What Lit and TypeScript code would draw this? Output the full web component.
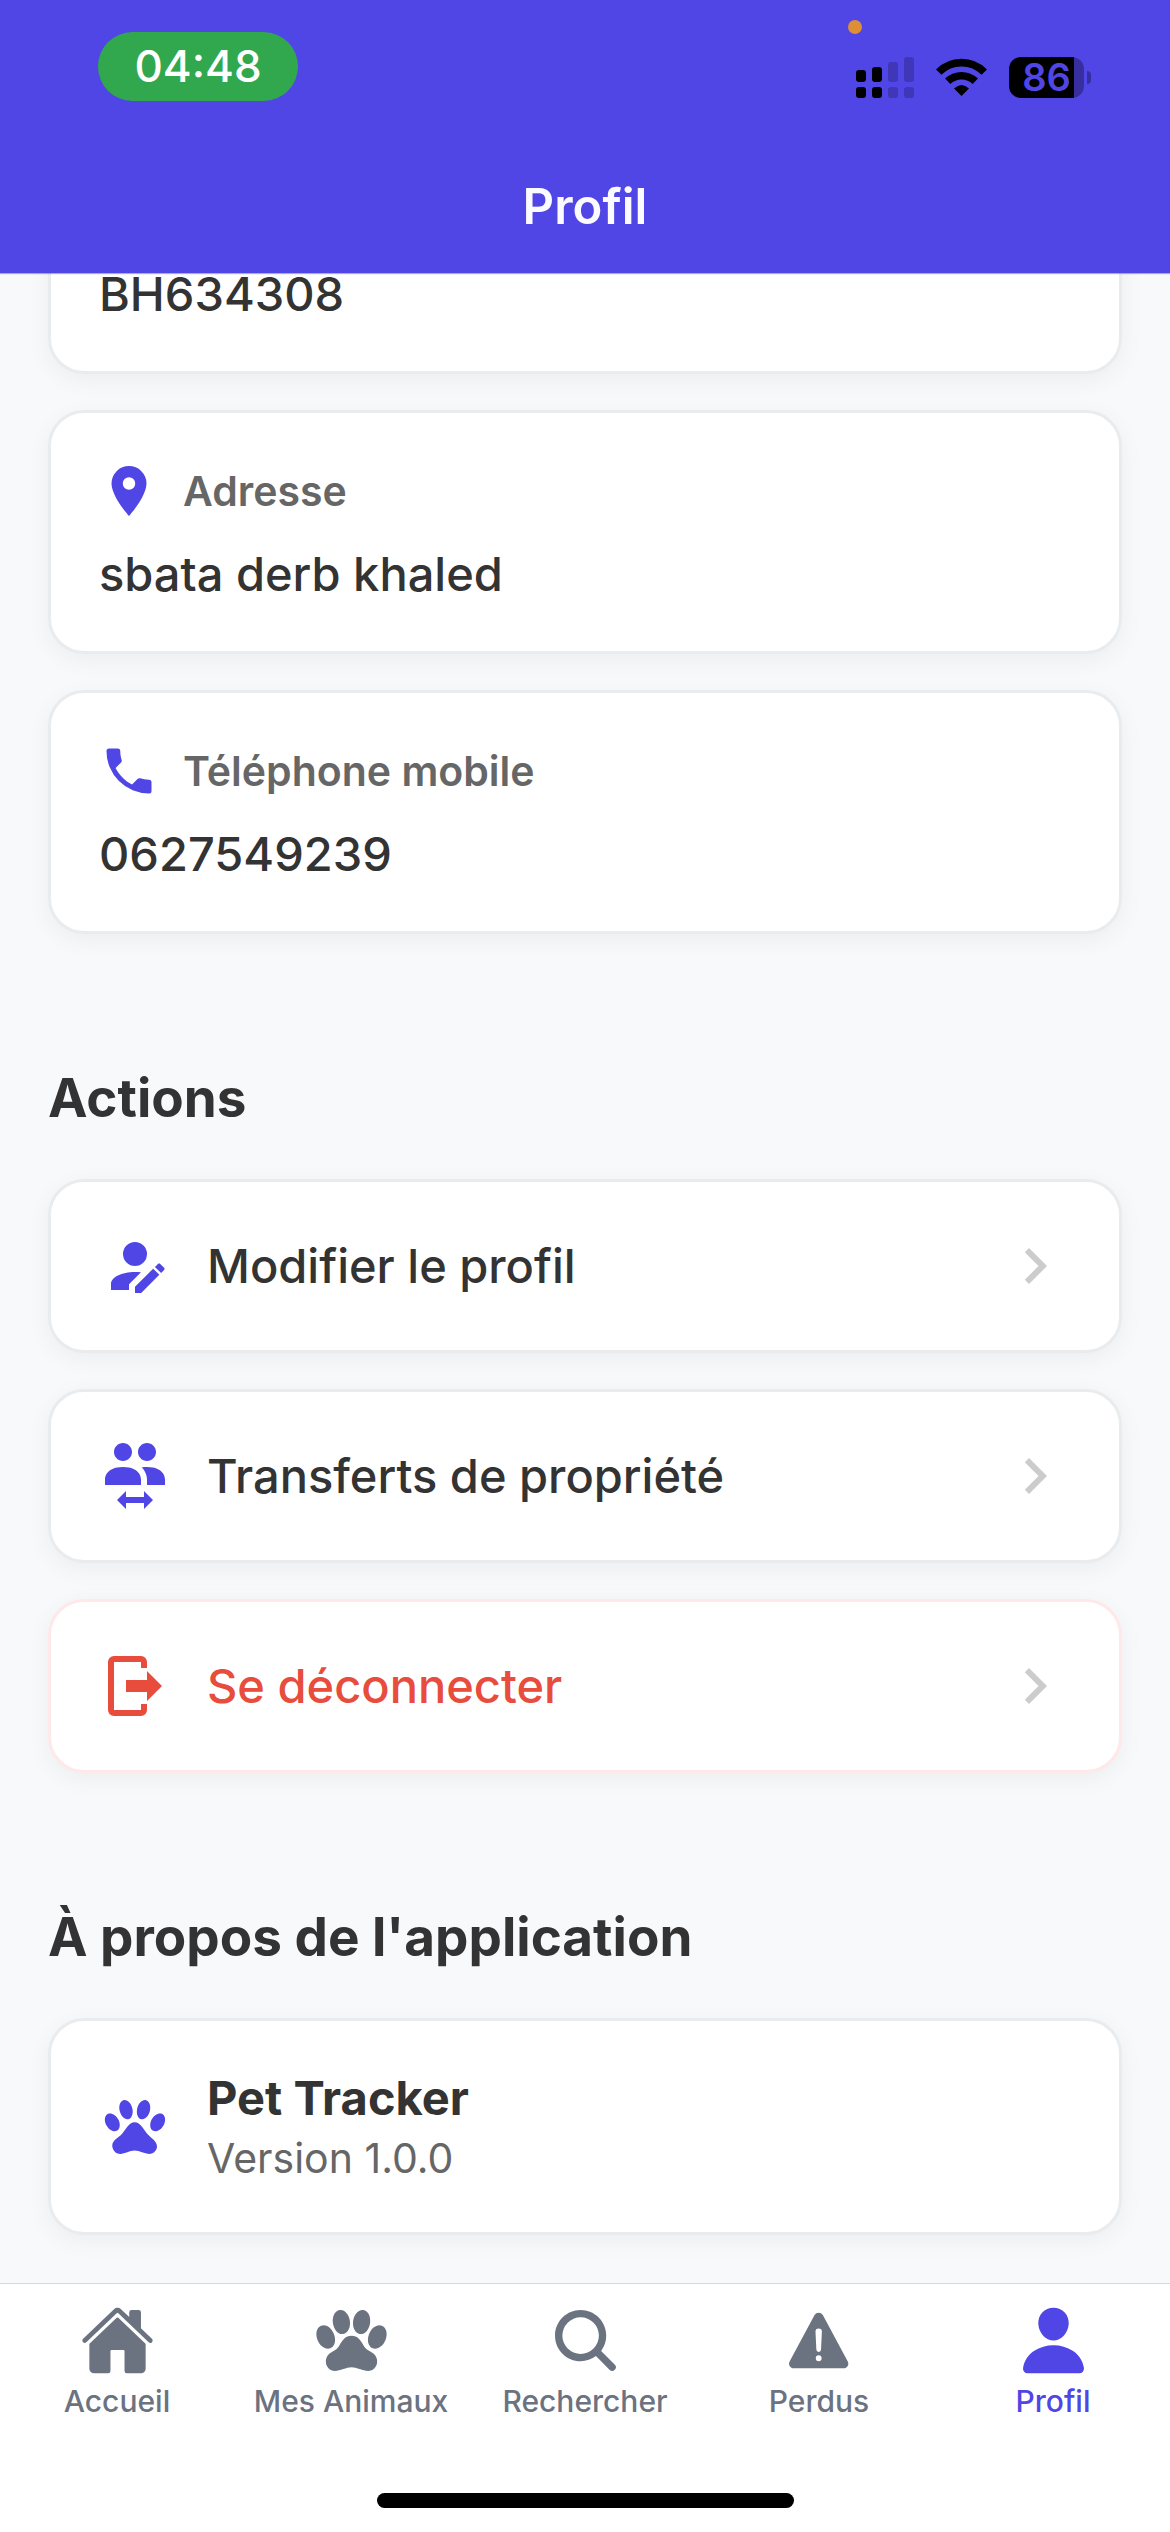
import { LitElement, html, css, svg } from "lit";
import { customElement } from "lit/decorators.js";
import { classMap } from "lit/directives/class-map.js";

interface Glyph {
  box: number;
  d: string;
}

const glyphs: Record<string, Glyph> = {
  pin: {
    box: 24,
    d: "M12,11.5A2.5,2.5 0 0,1 9.5,9A2.5,2.5 0 0,1 12,6.5A2.5,2.5 0 0,1 14.5,9A2.5,2.5 0 0,1 12,11.5M12,2A7,7 0 0,0 5,9C5,14.25 12,22 12,22C12,22 19,14.25 19,9A7,7 0 0,0 12,2Z",
  },
  phone: {
    box: 24,
    d: "M6.62,10.79C8.06,13.62 10.38,15.94 13.21,17.38L15.41,15.18C15.69,14.9 16.08,14.82 16.43,14.93C17.55,15.3 18.75,15.5 20,15.5A1,1 0 0,1 21,16.5V20A1,1 0 0,1 20,21A17,17 0 0,1 3,4A1,1 0 0,1 4,3H7.5A1,1 0 0,1 8.5,4C8.5,5.25 8.7,6.45 9.07,7.57C9.18,7.92 9.1,8.31 8.82,8.59L6.62,10.79Z",
  },
  edit: {
    box: 24,
    d: "M21.7,13.35L20.7,14.35L18.65,12.3L19.65,11.3C19.86,11.09 20.21,11.09 20.42,11.3L21.7,12.58C21.91,12.79 21.91,13.14 21.7,13.35M12,18.94L18.06,12.88L20.11,14.93L14.06,21H12V18.94M12,14C7.58,14 4,15.79 4,18V20H10V18.11L14,14.11C13.34,14.03 12.67,14 12,14M12,4A4,4 0 0,0 8,8A4,4 0 0,0 12,12A4,4 0 0,0 16,8A4,4 0 0,0 12,4Z",
  },
  transfer: {
    box: 24,
    d: "M16 9C22 9 22 13 22 13V15H16V13C16 13 16 11.31 14.85 9.8C14.68 9.57 14.47 9.35 14.25 9.14C14.77 9.06 15.34 9 16 9M2 13C2 13 2 9 8 9S14 13 14 13V15H2V13M9 17V19H15V17L18 20L15 23V21H9V23L6 20L9 17M8 1C6.34 1 5 2.34 5 4S6.34 7 8 7 11 5.66 11 4 9.66 1 8 1M16 1C14.34 1 13 2.34 13 4S14.34 7 16 7 19 5.66 19 4 17.66 1 16 1Z",
  },
  logout: {
    box: 24,
    d: "M16,17V14H9V10H16V7L21,12L16,17M14,2A2,2 0 0,1 16,4V6H14V4H5V20H14V18H16V20A2,2 0 0,1 14,22H5A2,2 0 0,1 3,20V4A2,2 0 0,1 5,2H14Z",
  },
  chevron: {
    box: 24,
    d: "M8.59,16.58L13.17,12L8.59,7.41L10,6L16,12L10,18L8.59,16.58Z",
  },
  pet: {
    box: 24,
    d: "M8.35,3C9.53,2.83 10.78,4.12 11.14,5.9C11.5,7.67 10.85,9.25 9.67,9.43C8.5,9.61 7.24,8.32 6.87,6.54C6.5,4.77 7.17,3.19 8.35,3M15.5,3C16.69,3.19 17.35,4.77 17,6.54C16.62,8.32 15.37,9.61 14.19,9.43C13,9.25 12.35,7.67 12.72,5.9C13.08,4.12 14.33,2.83 15.5,3M3,7.6C4.14,7.11 5.69,8 6.5,9.55C7.26,11.13 7,12.79 5.87,13.28C4.74,13.77 3.2,12.89 2.41,11.32C1.62,9.75 1.9,8.08 3,7.6M21,7.6C22.1,8.08 22.38,9.75 21.59,11.32C20.8,12.89 19.26,13.77 18.13,13.28C17,12.79 16.74,11.13 17.5,9.55C18.31,8 19.86,7.11 21,7.6M19.33,18.38C19.37,19.32 18.65,20.36 17.79,20.75C16,21.57 13.88,19.87 11.89,19.87C9.9,19.87 7.76,21.64 6,20.75C5,20.26 4.31,18.96 4.44,17.88C4.62,16.39 6.41,15.59 7.47,14.5C8.88,13.09 9.88,10.44 11.89,10.44C13.89,10.44 14.95,13.05 16.3,14.5C17.41,15.72 19.26,16.75 19.33,18.38Z",
  },
  home: {
    box: 512,
    d: "M261.56 101.28a8 8 0 00-11.06 0L66.4 277.15a8 8 0 00-2.47 5.79L63.9 448a32 32 0 0032 32H192a16 16 0 0016-16V328a8 8 0 018-8h80a8 8 0 018 8v136a16 16 0 0016 16h96.06a32 32 0 0032-32V282.94a8 8 0 00-2.47-5.79zM490.91 244.15l-74.8-71.56V64a16 16 0 00-16-16h-48a16 16 0 00-16 16v32l-57.92-55.38C272.77 35.14 264.71 32 256 32c-8.68 0-16.72 3.14-22.14 8.63l-212.7 203.5c-6.22 6-7 15.87-1.34 22.37A16 16 0 0043 267.56L250.5 69.28a8 8 0 0111.06 0l207.52 198.28a16 16 0 0022.59-.44c6.14-6.36 5.63-16.86-.76-22.97z",
  },
  paw: {
    box: 512,
    d: "M490.39 182.75c-5.55-13.19-14.77-22.7-26.67-27.49l-.16-.06a46.46 46.46 0 00-17-3.2h-.64c-27.24.41-55.05 23.56-69.19 57.61-10.37 24.9-11.56 51.68-3.18 71.64 5.54 13.2 14.78 22.71 26.73 27.5l.13.05a46.53 46.53 0 0017 3.2c27.5 0 55.6-23.15 70-57.65 10.24-24.87 11.37-51.63 2.98-71.6zM381.55 329.61c-15.71-9.44-30.56-18.37-40.26-34.41C314.53 250.8 298.37 224 256 224s-58.57 26.8-85.39 71.2c-9.72 16.06-24.6 25-40.36 34.48-18.07 10.86-36.74 22.08-44.8 44.16a66.93 66.93 0 00-4.65 25c0 35.95 28 65.2 62.4 65.2 17.75 0 36.64-6.15 56.63-12.66 19.22-6.26 39.09-12.73 56.27-12.73s37 6.47 56.15 12.73C332.2 457.85 351 464 368.8 464c34.35 0 62.3-29.25 62.3-65.2a67 67 0 00-4.75-25c-8.06-22.1-26.74-33.33-44.8-44.19zM150 188.85c11.9 14.93 27 23.15 42.52 23.15a42.88 42.88 0 006.33-.47c32.37-4.76 52.54-44.26 45.92-90C242 102.3 234.6 84.39 224 71.11 212.12 56.21 197 48 181.49 48a42.88 42.88 0 00-6.33.47c-32.37 4.76-52.54 44.26-45.92 90 2.76 19.2 10.16 37.09 20.76 50.38zM313.16 211.53a42.88 42.88 0 006.33.47c15.53 0 30.62-8.22 42.52-23.15 10.59-13.29 17.95-31.18 20.75-50.4 6.62-45.72-13.55-85.22-45.92-90a42.88 42.88 0 00-6.33-.47C315 48 299.9 56.21 288 71.11c-10.6 13.28-18 31.19-20.74 50.43-6.62 45.7 13.53 85.23 45.9 89.99zM111.59 308.8l.14-.05c11.93-4.79 21.16-14.29 26.69-27.48 8.38-20 7.2-46.75-3.15-71.65C120.94 175.16 92.85 152 65.38 152a46.4 46.4 0 00-17 3.2l-.14.05c-11.9 4.75-21.13 14.29-26.66 27.48-8.38 20-7.2 46.75 3.15 71.65C39.06 288.84 67.15 312 94.62 312a46.4 46.4 0 0016.97-3.2z",
  },
  search: {
    box: 512,
    d: "M456.69 421.39L362.6 327.3a173.81 173.81 0 0034.84-104.58C397.44 126.38 319.06 48 222.72 48S48 126.38 48 222.72s78.38 174.72 174.72 174.72A173.81 173.81 0 00327.3 362.6l94.09 94.09a25 25 0 0035.3-35.3zM97.92 222.72a124.8 124.8 0 11124.8 124.8 124.95 124.95 0 01-124.8-124.8z",
  },
  warning: {
    box: 512,
    d: "M449.07 399.08L278.64 82.58c-12.08-22.44-44.26-22.44-56.35 0L51.87 399.08A32 32 0 0080 446.25h340.89a32 32 0 0028.18-47.17zm-198.6-1.83a20 20 0 1120-20 20 20 0 01-20 20zm21.72-201.15l-5.74 122a16 16 0 01-32 0l-5.74-121.95a21.73 21.73 0 0121.5-22.69h.21a21.74 21.74 0 0121.73 22.7z",
  },
  person: {
    box: 512,
    d: "M332.64 64.58C313.18 43.57 286 32 256 32c-30.16 0-57.43 11.5-76.8 32.38-19.58 21.11-29.12 49.8-26.88 80.78C156.76 206.28 203.27 256 256 256s99.16-49.71 103.67-110.82c2.27-30.7-7.33-59.33-27.03-80.6zM432 480H80a31 31 0 01-24.2-11.13c-6.5-7.77-9.12-18.38-7.18-29.11C57.06 392.94 83.4 353.61 124.8 326c36.78-24.51 83.37-38 131.2-38s94.42 13.5 131.2 38c41.4 27.6 67.74 66.93 76.18 113.75 1.94 10.73-.68 21.34-7.18 29.11A31 31 0 01432 480z",
  },
};

const icon = (name: string, size: string) => {
  const g = glyphs[name];
  return html`<svg class="icon ${size}" viewBox="0 0 ${g.box} ${g.box}" aria-hidden="true">
    <path d=${g.d}></path>
  </svg>`;
};

const signalBars = [
  { x: 0, top: 13, on: true },
  { x: 16, top: 10, on: true },
  { x: 32, top: 5, on: false },
  { x: 48, top: 0, on: false },
];

const details = [
  { icon: "pin", label: "Adresse", value: "sbata derb khaled" },
  { icon: "phone", label: "Téléphone mobile", value: "0627549239" },
];

const actions = [
  { icon: "edit", label: "Modifier le profil", danger: false },
  { icon: "transfer", label: "Transferts de propriété", danger: false },
  { icon: "logout", label: "Se déconnecter", danger: true },
];

const tabs = [
  { icon: "home", label: "Accueil", href: "#accueil", active: false },
  { icon: "paw", label: "Mes Animaux", href: "#animaux", active: false },
  { icon: "search", label: "Rechercher", href: "#rechercher", active: false },
  { icon: "warning", label: "Perdus", href: "#perdus", active: false },
  { icon: "person", label: "Profil", href: "#profil", active: true },
];

@customElement("app-root")
export class AppRoot extends LitElement {
  static styles = css`
    :host {
      display: flex;
      flex-direction: column;
      height: 100vh;
      background: #f8f9fb;
      color: #333333;
      font-family: Inter, "Liberation Sans", sans-serif;
    }

    .icon {
      display: block;
      flex: none;
      fill: currentColor;
    }
    .small {
      width: 60px;
      height: 60px;
    }
    .medium {
      width: 72px;
      height: 72px;
    }
    .tabsize {
      width: 75px;
      height: 75px;
    }

    .header {
      position: relative;
      z-index: 1;
      flex: none;
      background: #5046e5;
      box-shadow: 0 1px 1px rgba(0, 0, 0, 0.3);
    }
    .status {
      display: flex;
      justify-content: space-between;
      align-items: flex-start;
      box-sizing: border-box;
      height: 141px;
      padding: 20px 79px 0 98px;
    }
    .clock {
      box-sizing: border-box;
      width: 200px;
      margin-top: 12px;
      border-radius: 35px;
      background: #32a84e;
      color: #ffffff;
      font-size: 44px;
      font-weight: 500;
      line-height: 69px;
      text-align: center;
    }
    .indicators {
      display: flex;
      flex-direction: column;
      gap: 23px;
    }
    .dot {
      width: 14px;
      height: 14px;
      border-radius: 50%;
      background: #dc8f35;
    }
    .levels {
      display: flex;
      gap: 22px;
      height: 41px;
      padding-left: 8px;
    }
    .signal {
      width: 58px;
      height: 41px;
    }
    .on {
      fill: #000000;
    }
    .off {
      fill: #3f37b7;
    }
    .wifi {
      width: 51px;
      height: 41px;
    }
    .arc {
      fill: none;
      stroke: #000000;
      stroke-width: 7.6;
    }
    .power {
      display: flex;
      align-items: center;
      gap: 3px;
    }
    .battery {
      box-sizing: border-box;
      width: 75px;
      border-radius: 12px;
      background: linear-gradient(90deg, #000000 65px, #372fa0 65px);
      color: #5046e5;
      font-size: 38px;
      font-weight: 600;
      line-height: 41px;
      text-align: center;
    }
    .nub {
      width: 4px;
      height: 13px;
      border-radius: 0 4px 4px 0;
      background: #372fa0;
    }
    .title {
      margin: 0;
      color: #fafaff;
      font-size: 49px;
      font-weight: 600;
      line-height: 132px;
      text-align: center;
    }

    /* The page rests at the end of its scroll range, its start beneath the header. */
    .main {
      display: flex;
      flex: 1;
      flex-direction: column;
      justify-content: flex-end;
      min-height: 0;
    }
    .page {
      display: flex;
      flex: none;
      flex-direction: column;
      gap: 132px;
      padding: 0 48px 48px;
    }
    .section {
      display: flex;
      flex-direction: column;
      gap: 36px;
    }
    .heading {
      margin: 0 0 12px;
      font-size: 53px;
      font-weight: 700;
      line-height: 65px;
    }
    .card {
      box-sizing: border-box;
      width: 100%;
      padding: 48px;
      border: 3px solid #e9ecef;
      border-radius: 36px;
      background: #ffffff;
      box-shadow: 0 6px 24px rgba(0, 0, 0, 0.05);
      text-align: left;
    }
    .row {
      display: flex;
      align-items: center;
      gap: 36px;
    }
    .caption {
      display: flex;
      align-items: center;
      gap: 24px;
      margin-bottom: 24px;
    }
    .accent {
      display: flex;
      color: #5046e5;
    }
    .label {
      color: #666666;
      font-size: 41px;
      font-weight: 600;
      line-height: 50px;
    }
    .value {
      font-size: 47px;
      font-weight: 500;
      line-height: 58px;
    }
    .action {
      color: #333333;
      font-family: inherit;
      font-size: 47px;
      font-weight: 500;
      line-height: 58px;
      cursor: pointer;
    }
    .danger {
      border-color: #ffe8ea;
      color: #e74c3c;
    }
    .danger .accent {
      color: inherit;
    }
    .name {
      flex: 1;
    }
    .go {
      display: flex;
      color: #cccccc;
    }
    .about {
      display: flex;
      flex-direction: column;
      gap: 6px;
    }
    .app {
      font-size: 47px;
      font-weight: 700;
      line-height: 58px;
    }
    .version {
      color: #666666;
      font-size: 41px;
      line-height: 51px;
    }

    .footer {
      flex: none;
      border-top: 1px solid #d8d8d8;
      background: #ffffff;
    }
    .tabs {
      display: grid;
      grid-template-columns: repeat(5, 1fr);
      padding: 19px 0 74px;
    }
    .tab {
      display: flex;
      flex-direction: column;
      align-items: center;
      gap: 5px;
      color: #6b7280;
      font-size: 30px;
      font-weight: 500;
      line-height: 36px;
      text-decoration: none;
      white-space: nowrap;
    }
    .active {
      color: #5046e5;
    }
    .bar {
      width: 417px;
      height: 15px;
      margin: 0 auto 24px;
      border-radius: 8px;
      background: #000000;
    }
  `;

  render() {
    return html`
      <header class="header">
        <div class="status">
          <div class="clock">04:48</div>
          <div class="indicators">
            <div class="dot"></div>
            <div class="levels">
              <svg class="signal" viewBox="0 0 58 41" aria-hidden="true">
                ${signalBars.map(
                  (b) => svg`<g class=${b.on ? "on" : "off"}>
                    <rect x=${b.x} y=${b.top} width="10" height=${25 - b.top} rx="3"></rect>
                    <rect x=${b.x} y="30" width="10" height="11" rx="3"></rect>
                  </g>`
                )}
              </svg>
              <svg class="wifi" viewBox="0 0 51 41" aria-hidden="true">
                <path class="arc" d="M2.7 15.2A32 32 0 0 1 48.3 15.2"></path>
                <path class="arc" d="M11.7 24.3A19.8 19.8 0 0 1 39.3 24.3"></path>
                <path d="M18 31.5Q25.5 24.5 33 31.5L25.5 39Z"></path>
              </svg>
              <div class="power">
                <div class="battery">86</div>
                <div class="nub"></div>
              </div>
            </div>
          </div>
        </div>
        <h1 class="title">Profil</h1>
      </header>

      <main class="main">
        <div class="page">
          <section class="section">
            <div class="card"><div class="value">BH634308</div></div>
            ${details.map(
              (d) => html`<div class="card">
                <div class="caption">
                  <span class="accent">${icon(d.icon, "small")}</span>
                  <span class="label">${d.label}</span>
                </div>
                <div class="value">${d.value}</div>
              </div>`
            )}
          </section>

          <section class="section">
            <h2 class="heading">Actions</h2>
            ${actions.map(
              (a) => html`<button
                type="button"
                class=${classMap({ card: true, row: true, action: true, danger: a.danger })}
              >
                <span class="accent">${icon(a.icon, "medium")}</span>
                <span class="name">${a.label}</span>
                <span class="go">${icon("chevron", "medium")}</span>
              </button>`
            )}
          </section>

          <section class="section">
            <h2 class="heading">À propos de l'application</h2>
            <div class="card row">
              <span class="accent">${icon("pet", "medium")}</span>
              <div class="about">
                <div class="app">Pet Tracker</div>
                <div class="version">Version 1.0.0</div>
              </div>
            </div>
          </section>
        </div>
      </main>

      <footer class="footer">
        <nav class="tabs">
          ${tabs.map(
            (t) => html`<a class=${classMap({ tab: true, active: t.active })} href=${t.href}>
              ${icon(t.icon, "tabsize")}
              <span>${t.label}</span>
            </a>`
          )}
        </nav>
        <div class="bar"></div>
      </footer>
    `;
  }
}
